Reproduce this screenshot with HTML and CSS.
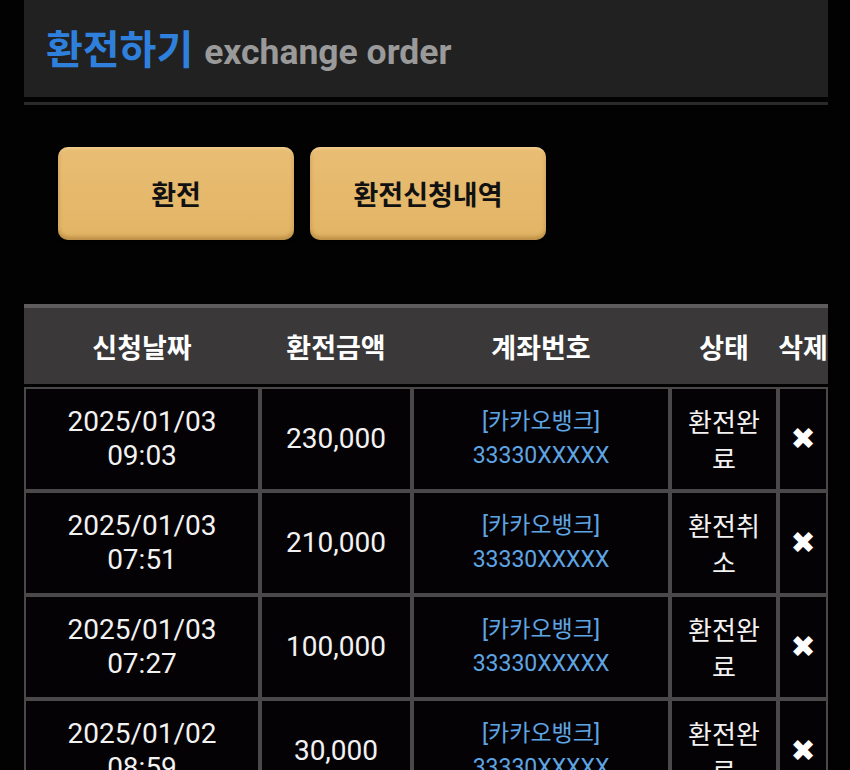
FILE: index.html
```html
<!DOCTYPE html>
<html lang="ko">
<head>
    <meta charset="UTF-8">
    <meta name="viewport" content="width=device-width, initial-scale=1.0">
    <title>환전하기</title>
    <link rel="stylesheet" href="styles.css">
</head>
<body>
    <div class="container">
        <div class="page-head">
            <h1><span class="title-ko">환전하기</span> <span class="title-en">exchange order</span></h1>
        </div>
        <div class="head-line"></div>

        <div class="tabs">
            <button class="tab-btn">환전</button>
            <button class="tab-btn">환전신청내역</button>
        </div>

        <table class="history">
            <colgroup>
                <col class="c-date">
                <col class="c-amount">
                <col class="c-account">
                <col class="c-status">
                <col class="c-del">
            </colgroup>
            <thead>
                <tr>
                    <th>신청날짜</th>
                    <th>환전금액</th>
                    <th>계좌번호</th>
                    <th>상태</th>
                    <th>삭제</th>
                </tr>
            </thead>
            <tbody>
                <tr>
                    <td>2025/01/03<br>09:03</td>
                    <td>230,000</td>
                    <td class="account">[카카오뱅크]<br>33330XXXXX</td>
                    <td class="status">환전완료</td>
                    <td class="del">&#10006;</td>
                </tr>
                <tr>
                    <td>2025/01/03<br>07:51</td>
                    <td>210,000</td>
                    <td class="account">[카카오뱅크]<br>33330XXXXX</td>
                    <td class="status">환전취소</td>
                    <td class="del">&#10006;</td>
                </tr>
                <tr>
                    <td>2025/01/03<br>07:27</td>
                    <td>100,000</td>
                    <td class="account">[카카오뱅크]<br>33330XXXXX</td>
                    <td class="status">환전완료</td>
                    <td class="del">&#10006;</td>
                </tr>
                <tr>
                    <td>2025/01/02<br>08:59</td>
                    <td>30,000</td>
                    <td class="account">[카카오뱅크]<br>33330XXXXX</td>
                    <td class="status">환전완료</td>
                    <td class="del">&#10006;</td>
                </tr>
            </tbody>
        </table>
    </div>
</body>
</html>
```

FILE: styles.css
```css
body {
    margin: 0;
    background-color: #030203;
    color: #f2f2f2;
    font-family: Roboto, "Noto Sans CJK KR", sans-serif;
}
.container {
    width: 804px;
    margin-left: 24px;
}
.page-head {
    height: 97px;
    background-color: #212121;
    display: flex;
    align-items: center;
    padding-left: 22px;
}
h1 {
    margin: 0;
    font-weight: bold;
    line-height: 1;
}
.title-ko {
    color: #2f80dc;
    font-size: 40px;
    font-family: "Noto Sans CJK KR", sans-serif;
}
.title-en {
    color: #9a9a9a;
    font-size: 35.5px;
    font-family: Roboto, sans-serif;
    margin-left: 3px;
}
.head-line {
    height: 3px;
    margin-top: 5px;
    background-color: #2a2a2b;
}
.tabs {
    display: flex;
    gap: 16px;
    padding: 42px 0 0 34px;
    height: 101px;
}
.tab-btn {
    width: 236px;
    height: 93px;
    border: none;
    border-radius: 10px;
    background: linear-gradient(#e9be74, #e2b465);
    box-shadow: inset 0 -3px 4px rgba(120, 80, 20, 0.4), inset 0 2px 2px rgba(255, 230, 180, 0.4), 0 2px 3px rgba(0, 0, 0, 0.6);
    color: #111;
    font-family: "Noto Sans CJK KR", sans-serif;
    font-size: 27px;
    font-weight: bold;
}
.history {
    margin-top: 56px;
    width: 804px;
    border-collapse: separate;
    border-spacing: 0;
    table-layout: fixed;
}
.c-date { width: 236px; }
.c-amount { width: 152px; }
.c-account { width: 258px; }
.c-status { width: 108px; }
.c-del { width: 50px; }
.history th {
    background-color: #3a3839;
    border-top: 4px solid #5e5c5d;
    border-bottom: 3px solid #030203;
    height: 76px;
    padding: 0;
    color: #fff;
    font-family: "Noto Sans CJK KR", sans-serif;
    font-size: 27px;
    font-weight: bold;
    white-space: nowrap;
}
.history td {
    background-color: #050205;
    border: 2px solid #4a4849;
    height: 100px;
    padding: 0;
    text-align: center;
    vertical-align: middle;
    font-size: 28px;
    line-height: 34px;
}
.history td.account {
    color: #5ea5e4;
    font-size: 23px;
}
.history td.status {
    font-family: "Noto Sans CJK KR", sans-serif;
    font-size: 26px;
    line-height: 37px;
    padding: 0 10px;
}
.history td.del {
    font-family: "DejaVu Sans", sans-serif;
    font-size: 30px;
    color: #fff;
}
```
